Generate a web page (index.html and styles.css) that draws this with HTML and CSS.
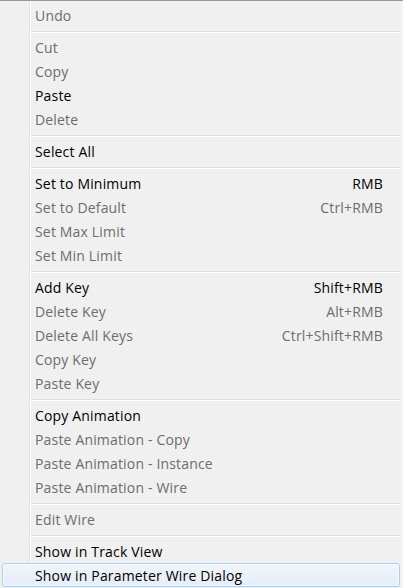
FILE: index.html
```html
<!DOCTYPE html>
<html>
<head>
<meta charset="utf-8">
<link rel="stylesheet" href="styles.css">
</head>
<body>
<div class="menu">
  <div class="item off"><span>Undo</span></div>
  <div class="sep"></div>
  <div class="item off"><span>Cut</span></div>
  <div class="item off"><span>Copy</span></div>
  <div class="item"><span>Paste</span></div>
  <div class="item off"><span>Delete</span></div>
  <div class="sep"></div>
  <div class="item"><span>Select All</span></div>
  <div class="sep"></div>
  <div class="item"><span>Set to Minimum</span><span class="key">RMB</span></div>
  <div class="item off"><span>Set to Default</span><span class="key">Ctrl+RMB</span></div>
  <div class="item off"><span>Set Max Limit</span></div>
  <div class="item off"><span>Set Min Limit</span></div>
  <div class="sep"></div>
  <div class="item"><span>Add Key</span><span class="key">Shift+RMB</span></div>
  <div class="item off"><span>Delete Key</span><span class="key">Alt+RMB</span></div>
  <div class="item off"><span>Delete All Keys</span><span class="key">Ctrl+Shift+RMB</span></div>
  <div class="item off"><span>Copy Key</span></div>
  <div class="item off"><span>Paste Key</span></div>
  <div class="sep"></div>
  <div class="item"><span>Copy Animation</span></div>
  <div class="item off"><span>Paste Animation - Copy</span></div>
  <div class="item off"><span>Paste Animation - Instance</span></div>
  <div class="item off"><span>Paste Animation - Wire</span></div>
  <div class="sep"></div>
  <div class="item off"><span>Edit Wire</span></div>
  <div class="sep"></div>
  <div class="item"><span>Show in Track View</span></div>
  <div class="item hot"><span>Show in Parameter Wire Dialog</span></div>
</div>
</body>
</html>
```
FILE: styles.css
```css
html, body {
  margin: 0;
  padding: 0;
  background: #f0f0f0;
}
.menu {
  width: 403px;
  height: 587px;
  box-sizing: border-box;
  border-top: 1px solid #979797;
  padding: 2px 3px 0 2px;
  background:
    linear-gradient(to right, transparent 29px, #e2e3e3 29px, #e2e3e3 30px, #ffffff 30px, #ffffff 31px, transparent 31px),
    linear-gradient(to left, #f7f7f7 2px, transparent 2px),
    #f0f0f0;
  font-family: "Open Sans", "Noto Sans", sans-serif;
  font-size: 14px;
  letter-spacing: 0.17px;
  overflow: hidden;
}
.item {
  height: 24px;
  box-sizing: border-box;
  display: flex;
  align-items: center;
  justify-content: space-between;
  padding: 0 17px 0 33px;
  color: #000;
  white-space: nowrap;
}
.item.off {
  color: #6d6d6d;
}
.item.hot {
  border: 1px solid #a9cff7;
  border-radius: 3px;
  padding-left: 32px;
  padding-right: 16px;
  background: linear-gradient(to bottom, #f3f5f8, #e4edfa);
  box-shadow: inset 0 0 0 1px rgba(255,255,255,0.6);
}
.sep {
  height: 8px;
  box-sizing: border-box;
  margin-left: 29px;
  padding-top: 4px;
}
.sep::before {
  content: "";
  display: block;
  height: 1px;
  background: #e0e0e0;
  border-bottom: 1px solid #ffffff;
}
```
